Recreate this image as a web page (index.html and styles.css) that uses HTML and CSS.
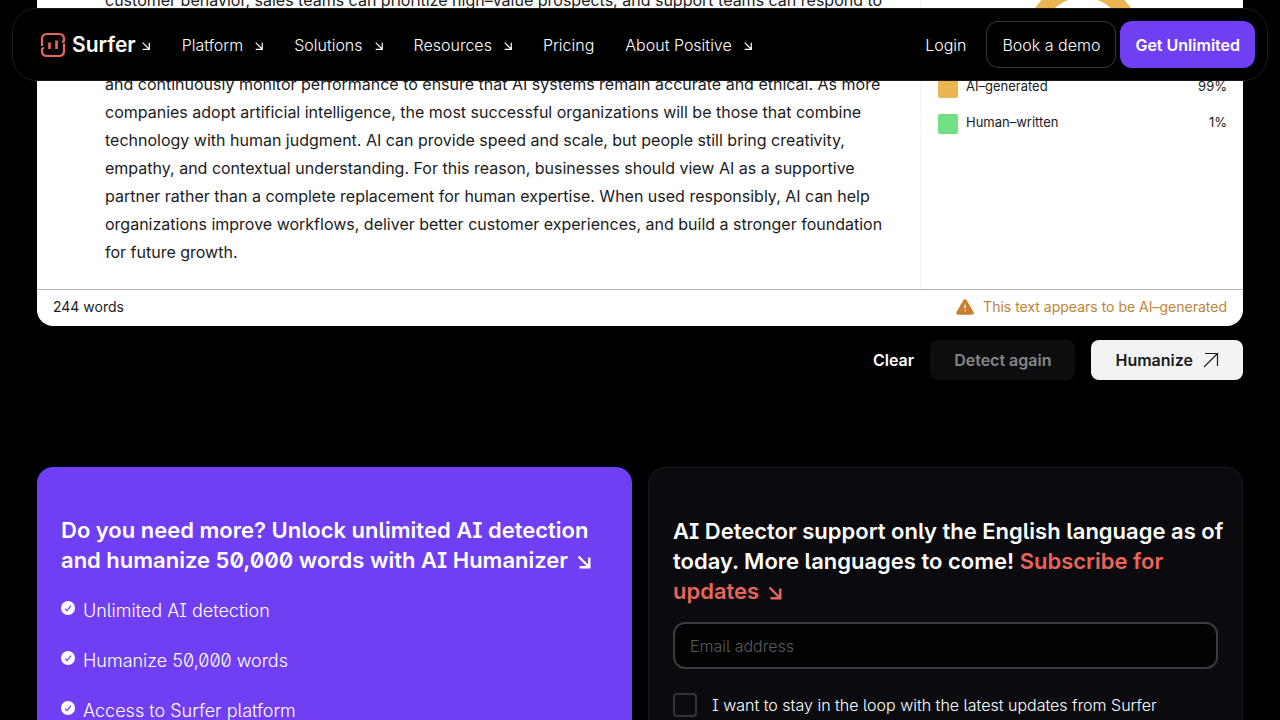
FILE: index.html
```html
<!DOCTYPE html>
<html lang="en">

<head>
    <meta charset="UTF-8">
    <meta name="viewport" content="width=device-width, initial-scale=1.0">
    <title>AI Detector | Surfer</title>
    <link rel="stylesheet" href="styles.css">
</head>

<body>
    <svg class="sprite" aria-hidden="true">
        <defs>
            <symbol id="arrow-down" viewBox="0 0 8 8">
                <path d="M.7 .7 7 7M7.3 .7V7.3H.7" fill="none" stroke="currentColor" stroke-width="1.2" />
            </symbol>
            <symbol id="arrow-bold" viewBox="0 0 14 14">
                <path d="M1.5 1.5 12 12M12.3 2.5V12.3H2.5" fill="none" stroke="currentColor" stroke-width="2.4" />
            </symbol>
            <symbol id="check" viewBox="0 0 14 14">
                <circle cx="7" cy="7" r="7" fill="#fff" />
                <path d="M4 7.6 6 9.6 10 4.6" fill="none" stroke="#703ff4" stroke-width="1.2" />
            </symbol>
        </defs>
    </svg>

    <header class="navbar">
        <a class="logo" href="#">
            <svg class="logo-mark" viewBox="0 0 26 26" fill="none" stroke="#e8695c" stroke-width="2.2">
                <path d="M2 14V7Q2 2 7 2H19Q24 2 24 7V8.5Q24 9.8 22 9.8" />
                <path d="M24 11.5V19Q24 24 19 24H7Q2 24 2 19V17.5Q2 16 4 16" />
                <path d="M9.5 10.5V17M16.5 8.5V17" stroke-width="2.6" />
            </svg>
            <span>Surfer</span>
            <svg class="nav-arrow"><use href="#arrow-down" /></svg>
        </a>
        <nav class="nav-links">
            <a href="#">Platform <svg class="nav-arrow"><use href="#arrow-down" /></svg></a>
            <a href="#">Solutions <svg class="nav-arrow"><use href="#arrow-down" /></svg></a>
            <a href="#">Resources <svg class="nav-arrow"><use href="#arrow-down" /></svg></a>
            <a href="#">Pricing</a>
            <a href="#">About Positive <svg class="nav-arrow"><use href="#arrow-down" /></svg></a>
        </nav>
        <div class="nav-actions">
            <a class="login" href="#">Login</a>
            <button class="btn-demo">Book a demo</button>
            <button class="btn-primary">Get Unlimited</button>
        </div>
    </header>

    <main>
        <section class="detector">
            <div class="detector-body">
                <div class="editor">
                    <p>customer behavior, sales teams can prioritize high–value prospects, and support teams can respond to<br>
                        common questions more quickly.<br>
                        However, businesses must review outputs, protect their data,<br>
                        and continuously monitor performance to ensure that AI systems remain accurate and ethical. As more
                        companies adopt artificial intelligence, the most successful organizations will be those that combine
                        technology with human judgment. AI can provide speed and scale, but people still bring creativity,
                        empathy, and contextual understanding. For this reason, businesses should view AI as a supportive
                        partner rather than a complete replacement for human expertise. When used responsibly, AI can help
                        organizations improve workflows, deliver better customer experiences, and build a stronger foundation
                        for future growth.</p>
                </div>
                <aside class="score">
                    <svg class="gauge" viewBox="0 0 116 58">
                        <path d="M8 58A50 50 0 0 1 108 58" fill="none" stroke="#ebb552" stroke-width="15" />
                    </svg>
                    <ul class="legend">
                        <li><span class="swatch ai"></span>AI–generated<span class="percent">99%</span></li>
                        <li><span class="swatch human"></span>Human–written<span class="percent">1%</span></li>
                    </ul>
                </aside>
            </div>
            <div class="detector-footer">
                <span>244 words</span>
                <span class="verdict">
                    <svg class="warning" viewBox="0 0 18 16">
                        <path d="M9 2 16 14H2Z" fill="#c97f2e" stroke="#c97f2e" stroke-width="3.5" stroke-linejoin="round" />
                        <path d="M9 5.5V9.5M9 11V12.2" stroke="#fff" stroke-width="1.2" />
                    </svg>
                    This text appears to be AI–generated
                </span>
            </div>
        </section>

        <div class="detector-actions">
            <button class="btn-clear">Clear</button>
            <button class="btn-detect" disabled>Detect again</button>
            <button class="btn-humanize">Humanize
                <svg class="arrow-up" viewBox="0 0 16 16">
                    <path d="M1 15 14.5 1.5M2 1.5H14.5V14" fill="none" stroke="currentColor" stroke-width="1.2" />
                </svg>
            </button>
        </div>

        <section class="cards">
            <div class="card card-offer">
                <h2>Do you need more? Unlock unlimited AI detection and humanize 50,000 words with AI Humanizer <svg class="title-arrow"><use href="#arrow-bold" /></svg></h2>
                <ul class="features">
                    <li><svg class="check"><use href="#check" /></svg>Unlimited AI detection</li>
                    <li><svg class="check"><use href="#check" /></svg>Humanize 50,000 words</li>
                    <li><svg class="check"><use href="#check" /></svg>Access to Surfer platform</li>
                </ul>
            </div>
            <form class="card card-subscribe">
                <h2>AI Detector support only the English language as of today. More languages to come! <span class="accent">Subscribe for updates <svg class="title-arrow"><use href="#arrow-bold" /></svg></span></h2>
                <input class="email" type="email" placeholder="Email address" aria-label="Email address">
                <label class="consent">
                    <input type="checkbox">
                    I want to stay in the loop with the latest updates from Surfer
                </label>
            </form>
        </section>
    </main>
</body>

</html>
```
FILE: styles.css
```css
* {
    box-sizing: border-box;
    margin: 0;
    padding: 0;
}

body {
    background: #000;
    color: #fff;
    font-family: "Inter", sans-serif;
    font-size: 16px;
    height: 100vh;
    overflow: hidden;
}

a {
    color: inherit;
    text-decoration: none;
}

ul {
    list-style: none;
}

button {
    border: none;
    font: inherit;
    cursor: pointer;
}

.sprite {
    position: absolute;
    width: 0;
    height: 0;
}

/* navbar */
.navbar {
    position: fixed;
    top: 8px;
    left: 12px;
    right: 12px;
    z-index: 10;
    display: flex;
    align-items: center;
    height: 73px;
    padding: 0 12px 0 27px;
    background: #000;
    border: 1px solid #1c1c1c;
    border-radius: 24px;
    color: #fff;
    font-weight: 300;
}

.logo {
    display: flex;
    align-items: center;
    gap: 6px;
    font-size: 21px;
    font-weight: 600;
}

.logo-mark {
    width: 26px;
    height: 26px;
}

.nav-arrow {
    width: 8px;
    height: 8px;
    margin-top: 3px;
}

.nav-links {
    display: flex;
    gap: 31px;
    margin-left: 32px;
}

.nav-links a {
    display: flex;
    align-items: center;
    gap: 12px;
}

.nav-actions {
    display: flex;
    align-items: center;
    gap: 4px;
    margin-left: auto;
}

.login {
    margin-right: 16px;
}

.btn-demo,
.btn-primary {
    height: 47px;
    padding: 0 15px;
    border-radius: 12px;
    background: #000;
    color: #fff;
}

.btn-demo {
    border: 1px solid #3a3a3a;
}

.btn-primary {
    background: #703ff4;
    font-weight: 600;
}

/* detector */
main {
    padding: 0 37px;
}

.detector {
    margin-top: -16px;
    background: #fff;
    border-radius: 0 0 16px 16px;
    color: #1b1b1b;
}

.detector-body {
    display: flex;
}

.editor {
    flex: 1;
    padding: 2px 24px 23px 68px;
    border-right: 2px solid #f7f7f7;
    line-height: 28px;
}

.score {
    width: 321px;
    padding: 0 16px;
    font-size: 13px;
}

.gauge {
    display: block;
    width: 116px;
    margin: -2px auto 0;
}

.legend {
    margin-top: 38px;
}

.legend li {
    display: flex;
    height: 20px;
    margin-bottom: 16px;
    line-height: 16px;
}

.swatch {
    width: 20px;
    height: 20px;
    margin-right: 8px;
    border-radius: 2px;
}

.swatch.ai {
    background: #ebb552;
}

.swatch.human {
    background: #74e084;
}

.percent {
    margin-left: auto;
}

.detector-footer {
    display: flex;
    align-items: center;
    justify-content: space-between;
    height: 37px;
    padding: 0 16px 3px;
    border-top: 1px solid #b4b4b4;
    font-size: 14px;
}

.verdict {
    display: flex;
    align-items: center;
    gap: 9px;
    color: #c08338;
}

.warning {
    width: 18px;
    height: 16px;
}

.detector-actions {
    display: flex;
    justify-content: flex-end;
    gap: 16px;
    margin-top: 14px;
}

.detector-actions button {
    height: 40px;
    border-radius: 8px;
    font-weight: 600;
}

.btn-clear {
    background: none;
    color: #fff;
}

.detector-actions .btn-detect {
    padding: 0 24px;
    background: #0d0d0f;
    color: #868686;
}

.btn-humanize {
    display: flex;
    align-items: center;
    gap: 10px;
    padding: 0 24px;
    background: #f3f3f3;
    color: #1b1b1b;
}

.arrow-up {
    width: 16px;
    height: 16px;
}

/* cards */
.cards {
    display: grid;
    grid-template-columns: 1fr 1fr;
    gap: 16px;
    margin-top: 87px;
    font-feature-settings: "ss02", "zero";
    font-weight: 300;
}

.card {
    padding: 48px 24px;
    border-radius: 16px;
}

.card h2 {
    margin-right: -12px;
    font-size: 22px;
    font-weight: 600;
    line-height: 30px;
}

.card-offer {
    background: #703ff4;
}

.card-subscribe {
    background: #0b0b0f;
    border: 1px solid #1a1a1e;
}

.accent {
    color: #e9655a;
}

.title-arrow {
    width: 14px;
    height: 14px;
    margin-left: 3px;
    vertical-align: -1px;
}

.features {
    margin-top: 20px;
    font-size: 18px;
    color: #fff;
}

.features li {
    display: flex;
    align-items: center;
    gap: 8px;
    height: 30px;
    margin-bottom: 20px;
}

.check {
    width: 14px;
    height: 14px;
    margin-bottom: 4px;
}

.email {
    display: block;
    width: 100%;
    height: 47px;
    margin-top: 16px;
    padding: 0 15px;
    background: #030304;
    border: 2px solid #3c3c3e;
    border-radius: 12px;
    color: #fff;
    font: inherit;
}

.email::placeholder {
    color: #5a5a5c;
}

.consent {
    display: flex;
    align-items: center;
    gap: 15px;
    margin-top: 24px;
}

.consent input {
    appearance: none;
    width: 24px;
    height: 24px;
    border: 2px solid #343436;
    border-radius: 4px;
}
```
